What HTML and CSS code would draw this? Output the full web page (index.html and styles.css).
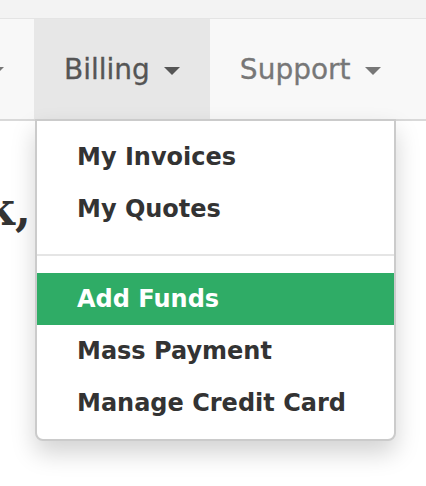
FILE: index.html
```html
<!DOCTYPE html>
<html lang="en">
<head>
  <meta charset="UTF-8" />
  <meta name="viewport" content="width=device-width, initial-scale=1" />
  <title>Client Area</title>
  <link rel="stylesheet" href="styles.css">
</head>
<body>
  <div class="topbar"></div>
  <nav class="navbar">
    <ul class="nav">
      <li class="nav-item first"><span>Services</span><span class="caret"></span></li>
      <li class="nav-item active">
        <span>Billing</span><span class="caret"></span>
        <ul class="dropdown-menu">
          <li><a href="#">My Invoices</a></li>
          <li><a href="#">My Quotes</a></li>
          <li class="divider"></li>
          <li><a href="#" class="selected">Add Funds</a></li>
          <li><a href="#">Mass Payment</a></li>
          <li><a href="#">Manage Credit Card</a></li>
        </ul>
      </li>
      <li class="nav-item"><span>Support</span><span class="caret"></span></li>
    </ul>
  </nav>
  <div class="content">
    <div class="hero">
      <h1>Welcome back,</h1>
    </div>
  </div>
</body>
</html>
```

FILE: styles.css
```css
html, body {
  min-height: 100vh;
}
body {
  margin: 0;
  background: #fff;
  font-family: 'DejaVu Sans', Arial, sans-serif;
  color: #333;
}
.topbar {
  height: 18px;
  background: #f3f3f3;
  border-bottom: 1px solid #e4e4e4;
}
.navbar {
  position: relative;
  z-index: 5;
  background: #f8f8f8;
  border-bottom: 2px solid #d9d9d9;
  height: 100px;
}
.nav {
  list-style: none;
  margin: 0;
  padding: 0;
  display: flex;
  height: 100%;
}
.nav-item {
  position: relative;
  display: flex;
  align-items: center;
  padding: 0 30px;
  font-size: 28px;
  color: #777;
  white-space: nowrap;
  -webkit-text-stroke: 0.3px currentColor;
}
.nav-item.first {
  width: 200px;
  flex-shrink: 0;
  justify-content: flex-end;
  box-sizing: border-box;
  margin-left: -166px;
}
.nav-item.active {
  background: #e7e7e7;
  color: #555;
}
.caret {
  display: inline-block;
  width: 0;
  height: 0;
  margin-left: 14px;
  margin-top: 4px;
  border-top: 8px solid currentColor;
  border-left: 8px solid transparent;
  border-right: 8px solid transparent;
}
.dropdown-menu {
  position: absolute;
  top: 100%;
  left: 1px;
  width: 357px;
  margin: 0;
  padding: 10px 0;
  list-style: none;
  background: #fff;
  border: 2px solid #cbcbcb;
  border-radius: 0 0 8px 8px;
  box-shadow: 0 12px 24px rgba(0,0,0,0.175);
  -webkit-text-stroke: 0;
}
.dropdown-menu a {
  display: block;
  padding: 0 40px;
  line-height: 52px;
  font-size: 24px;
  font-weight: 700;
  color: #333;
  text-decoration: none;
}
.dropdown-menu a.selected {
  background: #2fac66;
  color: #fff;
}
.divider {
  height: 2px;
  margin: 19px 0 17px;
  background: #e5e5e5;
}
.content {
  padding-top: 65px;
}
.hero {
  width: 31px;
  display: flex;
  justify-content: flex-end;
}
.hero h1 {
  margin: 0;
  flex-shrink: 0;
  white-space: nowrap;
  font-family: 'DejaVu Serif', 'Liberation Serif', serif;
  font-weight: 700;
  font-size: 46px;
  line-height: 1;
  color: #333;
}
```
